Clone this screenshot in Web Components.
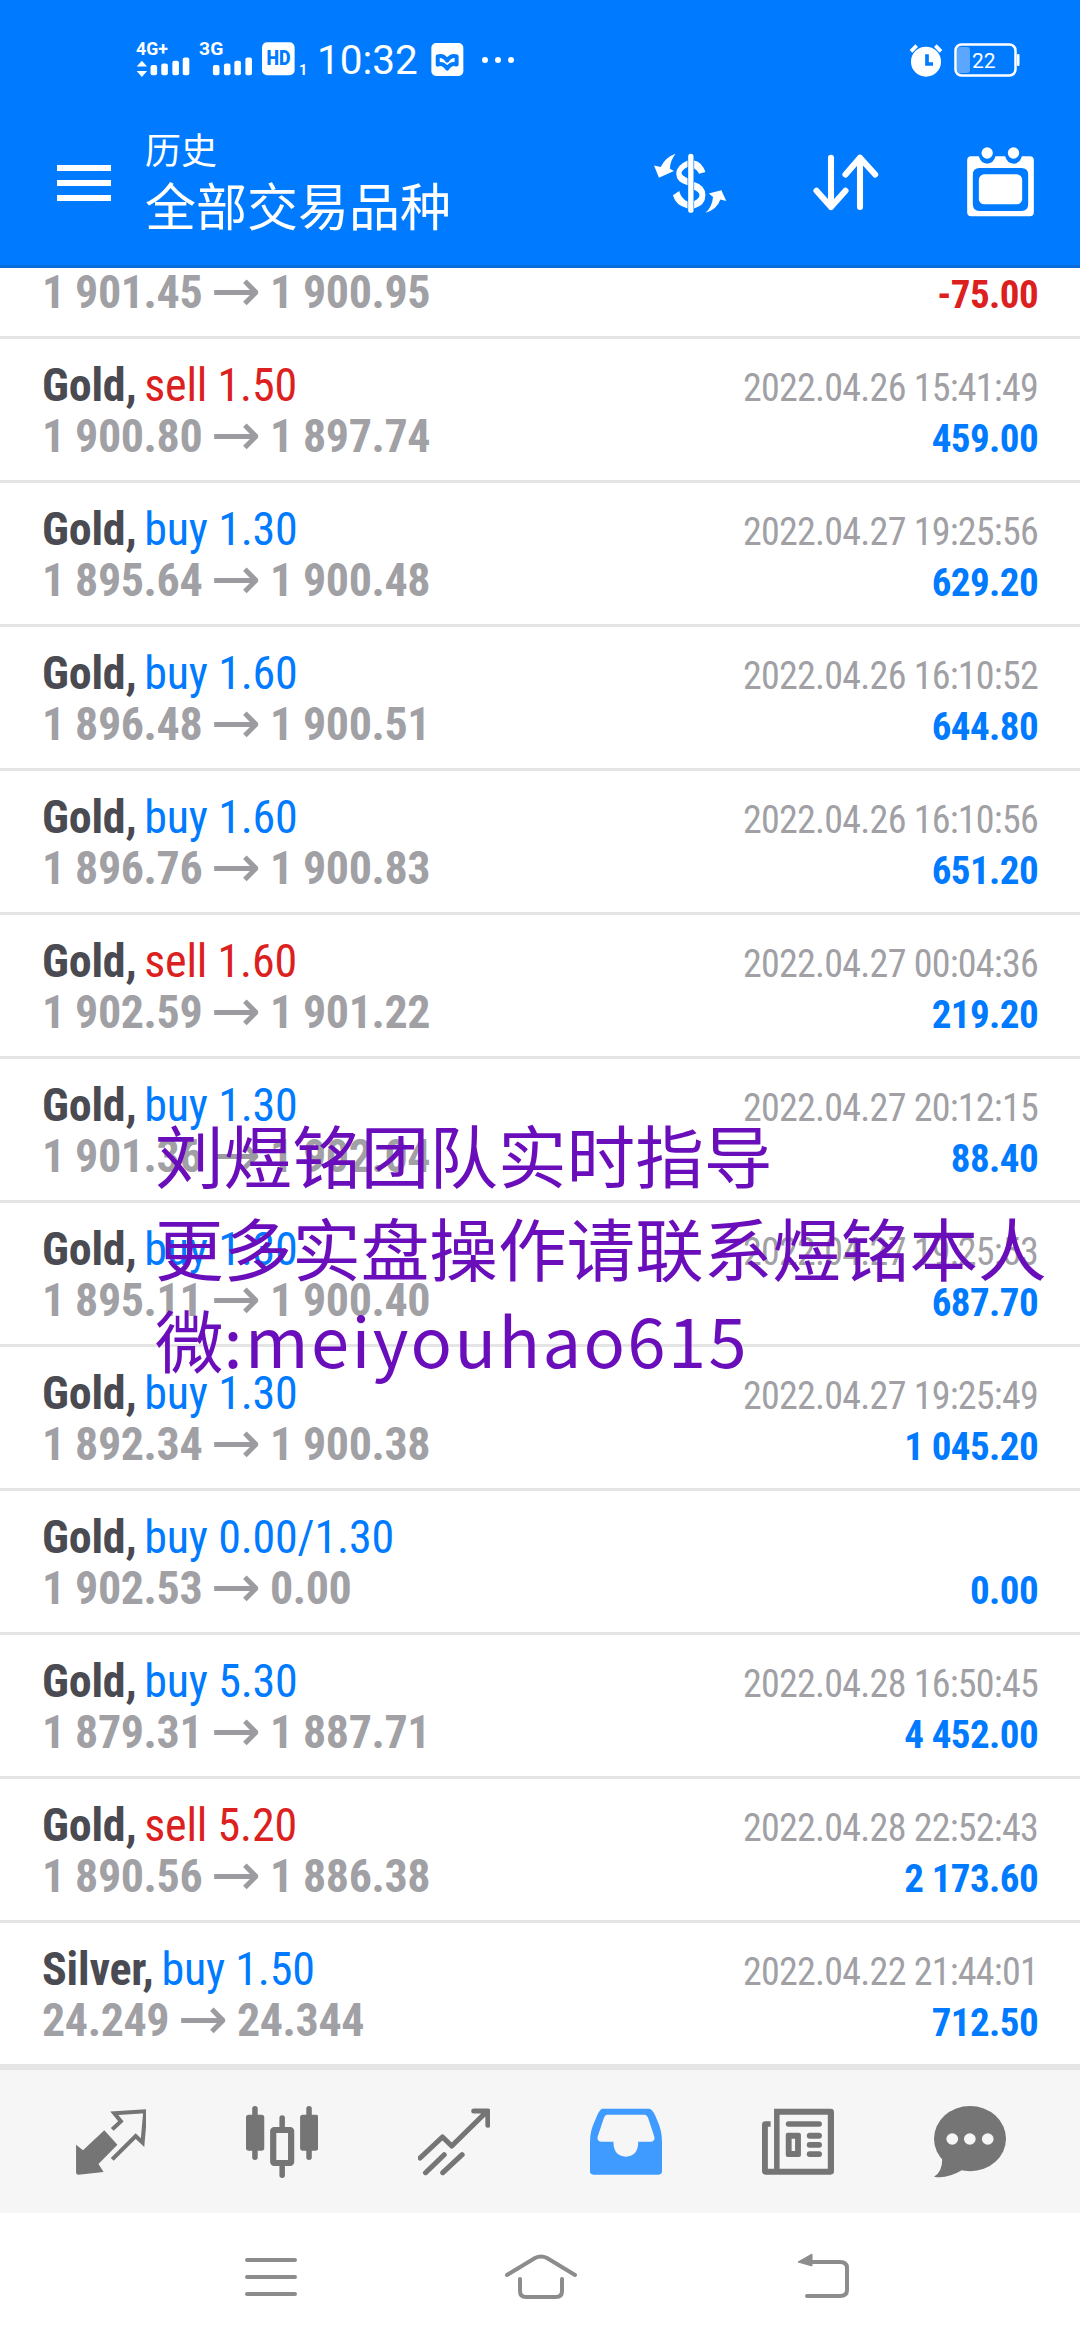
<!DOCTYPE html>
<html><head><meta charset="utf-8">
<style>
html,body{margin:0;padding:0;background:#fff}
body{width:1080px;height:2340px;overflow:hidden;position:relative;display:flex;flex-direction:column;font-family:Roboto,"Noto Sans CJK SC",sans-serif}
</style></head>
<body>
<status-bar></status-bar>
<app-bar></app-bar>
<trade-list>
<trade-row first prices="1 901.45|1 900.95" amount="-75.00" neg></trade-row>
<trade-row sym="Gold" side="sell" vol="1.50" prices="1 900.80|1 897.74" date="2022.04.26 15:41:49" amount="459.00"></trade-row>
<trade-row sym="Gold" side="buy" vol="1.30" prices="1 895.64|1 900.48" date="2022.04.27 19:25:56" amount="629.20"></trade-row>
<trade-row sym="Gold" side="buy" vol="1.60" prices="1 896.48|1 900.51" date="2022.04.26 16:10:52" amount="644.80"></trade-row>
<trade-row sym="Gold" side="buy" vol="1.60" prices="1 896.76|1 900.83" date="2022.04.26 16:10:56" amount="651.20"></trade-row>
<trade-row sym="Gold" side="sell" vol="1.60" prices="1 902.59|1 901.22" date="2022.04.27 00:04:36" amount="219.20"></trade-row>
<trade-row sym="Gold" side="buy" vol="1.30" prices="1 901.36|1 902.04" date="2022.04.27 20:12:15" amount="88.40"></trade-row>
<trade-row sym="Gold" side="buy" vol="1.30" prices="1 895.11|1 900.40" date="2022.04.27 19:25:53" amount="687.70"></trade-row>
<trade-row sym="Gold" side="buy" vol="1.30" prices="1 892.34|1 900.38" date="2022.04.27 19:25:49" amount="1 045.20"></trade-row>
<trade-row sym="Gold" side="buy" vol="0.00/1.30" prices="1 902.53|0.00" date="" amount="0.00"></trade-row>
<trade-row sym="Gold" side="buy" vol="5.30" prices="1 879.31|1 887.71" date="2022.04.28 16:50:45" amount="4 452.00"></trade-row>
<trade-row sym="Gold" side="sell" vol="5.20" prices="1 890.56|1 886.38" date="2022.04.28 22:52:43" amount="2 173.60"></trade-row>
<trade-row sym="Silver" side="buy" vol="1.50" prices="24.249|24.344" date="2022.04.22 21:44:01" amount="712.50"></trade-row>
</trade-list>
<tab-bar></tab-bar>
<sys-nav></sys-nav>
<water-mark></water-mark>
<script>
function def(name,html){
  customElements.define(name,class extends HTMLElement{
    connectedCallback(){
      if(this.shadowRoot)return;
      const r=this.attachShadow({mode:'open'});
      r.innerHTML=typeof html==='function'?html(this):html;
    }
  });
}
const COND='"Roboto Condensed","Liberation Sans Narrow",Roboto,sans-serif';
def('status-bar',`<style>
:host{display:flex;align-items:center;height:90px;flex:none;background:#007bff;color:#fff;padding:29px 0 0 136px;box-sizing:border-box;font-family:Roboto,sans-serif}
svg{display:block;flex:none}
.t{font-size:40.5px;line-height:40px;margin:0 13px 0 9px}
.sp{flex:1}
</style>
<svg width="54" height="37" viewBox="395 126 156 110" preserveAspectRatio="none"><text x="395" y="168" fill="#fff" font-family="Roboto" font-weight="700" font-size="52" textLength="92" lengthAdjust="spacingAndGlyphs">4G+</text><path d="M412 185l15 17h-30zM412 233l15-18h-30z" fill="#fff"/><g fill="#fff"><rect x="437" y="197" width="19" height="31" rx="6"/><rect x="468" y="193" width="19" height="35" rx="6"/><rect x="500" y="185" width="19" height="43" rx="6"/><rect x="530" y="175" width="19" height="53" rx="6"/></g></svg>
<svg style="margin-left:7px" width="56" height="37" viewBox="572 126 162 110" preserveAspectRatio="none"><text x="578" y="168" fill="#fff" font-family="Roboto" font-weight="700" font-size="52" textLength="70" lengthAdjust="spacingAndGlyphs">3G</text><g fill="#fff"><rect x="618" y="197" width="19" height="31" rx="6"/><rect x="650" y="193" width="19" height="35" rx="6"/><rect x="680" y="185" width="19" height="43" rx="6"/><rect x="712" y="175" width="19" height="53" rx="6"/></g></svg>
<svg style="margin-left:9px" width="46" height="37" viewBox="762 126 134 110" preserveAspectRatio="none"><rect x="762" y="130" width="95" height="98" rx="15" fill="#fff"/><text x="775" y="197" fill="#007bff" font-family="Roboto" font-weight="900" font-size="58" textLength="70" lengthAdjust="spacingAndGlyphs">HD</text><text x="870" y="226" fill="#fff" font-family="Roboto" font-weight="700" font-size="42">1</text></svg>
<span class="t">10:32</span>
<svg width="33" height="33" viewBox="1249 130 96 98"><rect x="1249" y="130" width="95" height="98" rx="14" fill="#fff"/><path d="M1268 170q16-6 28 12q12-18 28-12v24q-16-6-28 12q-12-18-28-12z" fill="none" stroke="#007bff" stroke-width="12" stroke-linejoin="round"/></svg>
<svg style="margin-left:17px" width="34" height="8" viewBox="0 0 34 8"><circle cx="4" cy="4" r="3" fill="#fff"/><circle cx="17" cy="4" r="3" fill="#fff"/><circle cx="30" cy="4" r="3" fill="#fff"/></svg>
<span class="sp"></span>
<svg width="34" height="34" viewBox="1070 130 98 102"><circle cx="1119" cy="186" r="45" fill="#fff"/><path d="M1122 164v29h18" fill="none" stroke="#007bff" stroke-width="11"/><path d="M1074 155l17-17M1147 138l17 17" stroke="#fff" stroke-width="11" fill="none"/></svg>
<svg style="margin:0 60px 0 11px" width="66" height="34" viewBox="0 0 66 34"><rect x="1.5" y="1.5" width="60" height="31" rx="6" fill="none" stroke="#fff" stroke-width="2.5"/><rect x="3" y="4" width="13" height="26" rx="3" fill="#5ba6ff"/><rect x="63" y="11" width="2.5" height="12" rx="1" fill="#fff"/><text x="18" y="25" font-family="Roboto" font-size="21" fill="#fff">22</text></svg>`);
def('app-bar',`<style>
:host{display:flex;align-items:center;height:178px;flex:none;background:#007bff;color:#fff;box-sizing:border-box;border-bottom:3px solid #0a6cd8;position:relative;z-index:2;font-family:"Noto Sans CJK SC",sans-serif}
svg{display:block;flex:none}
.menu{margin:11px 34px 0 57px}
.title{display:flex;flex-direction:column;flex:1;margin-top:3px}
.a{font-size:36px;line-height:50px;height:50px}
.b{font-size:51px;line-height:62px;height:62px}
</style>
<svg class="menu" width="54" height="36" viewBox="0 0 54 36"><rect y="0" width="54" height="6" fill="#fff"/><rect y="15" width="54" height="6" fill="#fff"/><rect y="30" width="54" height="6" fill="#fff"/></svg>
<div class="title"><span class="a">历史</span><span class="b">全部交易品种</span></div>
<svg width="73" height="60" viewBox="40 38 220 180" fill="#fff" style="margin-top:11px"><rect x="143" y="40" width="16" height="178" rx="8"/>
<path d="M161 60Q185 65 195 95L176 100Q170 88 161 84ZM141 60Q107 75 107 100Q107 125 141 135V114Q123 105 123 98Q123 90 141 80ZM161 125Q195 135 195 165Q195 195 161 205V182Q177 175 177 165Q177 155 161 148ZM141 205Q105 195 97 165L116 152Q122 175 141 184Z"/>
<path d="M105 40Q88 62 88 85L100 92L55 112L40 75L60 80Q75 50 105 40ZM195 218Q215 200 218 170L205 160L243 150L258 182L240 178Q230 208 195 218Z"/></svg>
<svg style="margin:11px 0 0 85px" width="67" height="58" viewBox="790 465 196 172"><path d="M845 476V622M802 574L845 622L888 574M931 622V476M888 526L931 476L976 526" fill="none" stroke="#fff" stroke-width="18" stroke-linecap="round" stroke-linejoin="round"/></svg>
<svg style="margin:8px 45px 0 87px" width="69" height="70" viewBox="1237 440 200 210"><path fill-rule="evenodd" fill="#fff" d="M1249 468H1272Q1278 490 1297 490Q1316 490 1322 468H1351Q1357 490 1376 490Q1395 490 1401 468H1425Q1437 468 1437 480V636Q1437 648 1425 648H1249Q1237 648 1237 636V480Q1237 468 1249 468ZM1274 503Q1254 503 1254 523V612Q1254 632 1274 632H1400Q1420 632 1420 612V523Q1420 503 1400 503Z"/><rect x="1272" y="522" width="130" height="90" rx="16" fill="#fff"/><circle cx="1297" cy="458" r="17" fill="#fff"/><circle cx="1376" cy="458" r="17" fill="#fff"/></svg>`);
def('trade-list',`<style>
:host{display:block;flex:1;min-height:0;overflow:hidden;position:relative}
.in{margin-top:-73px}
</style><div class="in"><slot></slot></div>`);
def('trade-row',h=>{
  const [p1,p2]=(h.getAttribute('prices')||'|').split('|');
  const sym=h.getAttribute('sym'),side=h.getAttribute('side'),vol=h.getAttribute('vol');
  const date=h.getAttribute('date')||'',amt=h.getAttribute('amount');
  const neg=h.hasAttribute('neg');
  const c=side==='sell'?'r':'b';
  return `<style>
:host{display:flex;justify-content:space-between;height:144px;box-sizing:border-box;border-bottom:3px solid #e5e5e5;padding:21px 42px 0 42px;background:#fff;font-family:${COND};white-space:pre}
.col{display:flex;flex-direction:column}
.right{align-items:flex-end;padding-top:3px}
.l{height:51px;line-height:51px;display:block}
.title{font-size:46px;letter-spacing:-.2px;word-spacing:-2.5px}
.title .r,.title .b{word-spacing:0}
.sym{font-weight:700;color:#4a4a52}
.b{color:#007aff}.r{color:#dc2020}
.price{font-size:46px;font-weight:700;color:#a0a0a5;letter-spacing:-.4px}
.ar{font:400 60px/0 "DejaVu Sans",sans-serif;color:#9c9ca0;letter-spacing:0;vertical-align:-3px;margin:0 -1.5px}
.date{font-size:38px;color:#a0a0a5;letter-spacing:-.74px}
.amt{font-size:39px;font-weight:700;letter-spacing:-.6px}
</style>
<div class="col"><span class="l title">${sym?`<span class="sym">${sym},</span> <span class="${c}">${side} ${vol}</span>`:''}</span><span class="l price">${p1} <span class="ar">→</span> ${p2}</span></div>
<div class="col right"><span class="l date">${date}</span><span class="l amt ${neg||amt[0]=='-'?'r':'b'}">${amt}</span></div>`;
});
def('tab-bar',`<style>
:host{display:grid;grid-template-columns:repeat(6,172px);flex:none;height:149px;box-sizing:border-box;padding:0 24px;align-items:center;justify-items:center;background:#f6f6f6;border-top:6px solid #e5e5e5}
svg{display:block}
</style>
<svg width="72" height="72" viewBox="209 192 209 216" preserveAspectRatio="none"><path fill="#757575" d="M215 308L235 325L297 265L335 308L280 366L295 390L222 398Q215 398 215 390Z"/><path d="M320 262L345 238L326 214L416 208L408 302L388 282L320 352" fill="none" stroke="#757575" stroke-width="12"/></svg>
<svg width="72" height="72" viewBox="714 192 209 216" preserveAspectRatio="none"><g fill="#757575"><rect x="714" y="218" width="53" height="108" rx="8"/><rect x="871" y="218" width="53" height="108" rx="8"/><rect x="732" y="192" width="16" height="162" rx="8"/><rect x="889" y="192" width="16" height="162" rx="8"/><rect x="811" y="220" width="16" height="188" rx="8"/></g><rect x="793" y="264" width="52" height="99" rx="3" fill="#f6f6f6" stroke="#757575" stroke-width="18"/></svg>
<svg width="72" height="72" viewBox="1214 192 209 216" preserveAspectRatio="none"><path d="M1220 348L1285 285L1312 312L1410 212M1376 207H1417V250M1236 392L1290 338M1286 392L1342 338" fill="none" stroke="#757575" stroke-width="15" stroke-linecap="round" stroke-linejoin="round"/></svg>
<svg width="72" height="72" viewBox="145 192 209 216" preserveAspectRatio="none"><path fill="#3f9bff" fill-rule="evenodd" d="M180 200H318Q330 205 340 235Q354 265 354 300V388Q354 398 344 398H155Q145 398 145 388V300Q145 265 160 235Q170 205 180 200ZM195 218Q187 218 183 235L167 285Q165 298 177 299H213Q213 342 249 344Q285 342 285 299H322Q334 298 332 285L316 235Q312 218 303 218Z"/></svg>
<svg width="72" height="72" viewBox="645 192 209 216" preserveAspectRatio="none"><path fill="#757575" fill-rule="evenodd" d="M670 238H655Q645 238 645 248V388Q645 398 655 398H844Q854 398 854 388V210Q854 200 844 200H680V380H662V254H670ZM696 218H836V380H696Z"/><g fill="#757575"><rect x="714" y="238" width="105" height="16" rx="8"/><path fill-rule="evenodd" d="M720 272H752Q758 272 758 278V339Q758 345 752 345H720Q714 345 714 339V278Q714 272 720 272ZM731 290V327H741V290Z"/><rect x="775" y="272" width="44" height="18" rx="9"/><rect x="775" y="300" width="44" height="17" rx="8"/><rect x="775" y="328" width="44" height="17" rx="8"/></g></svg>
<svg width="72" height="72" viewBox="1144 192 209 216" preserveAspectRatio="none"><ellipse cx="1248.500" cy="290" rx="104.500" ry="98" fill="#757575"/><path d="M1168 350Q1168 390 1144 404Q1180 412 1225 385Z" fill="#757575"/><g fill="#f6f6f6"><circle cx="1197" cy="291" r="17"/><circle cx="1248" cy="291" r="17"/><circle cx="1300" cy="291" r="17"/></g></svg>`);
def('sys-nav',`<style>
:host{display:grid;grid-template-columns:repeat(3,1fr);flex:none;height:127px;background:#fff;align-items:start}
svg{display:block}
</style>
<svg style="margin:42px 0 0 244px" width="54" height="44" viewBox="0 0 54 44"><path d="M3 5H51M3 22H51M3 39H51" stroke="#8c8c8c" stroke-width="4" stroke-linecap="round"/></svg>
<svg style="margin:40px 0 0 144px" width="74" height="48" viewBox="0 0 74 48"><path d="M3 22L31 5Q37 2 43 5L71 22M16 26V38Q16 44 22 44H52Q58 44 58 38V26" fill="none" stroke="#8c8c8c" stroke-width="4" stroke-linecap="round"/></svg>
<svg style="margin:40px 0 0 76px" width="56" height="46" viewBox="0 0 56 46"><path d="M2 9L16 1V13Z" fill="#8c8c8c" stroke="#8c8c8c" stroke-width="1"/><path d="M14 9H44Q51 9 51 15V37Q51 43 44 43H11" fill="none" stroke="#8c8c8c" stroke-width="4" stroke-linecap="round"/></svg>`);
def('water-mark',`<style>
:host{position:absolute;left:155px;top:1107px;color:#6a0dbb;font:68.6px/92.5px "Noto Sans CJK SC",sans-serif;white-space:nowrap;pointer-events:none;z-index:3}
div{height:92.5px}
.en{letter-spacing:2.4px}
</style><div>刘煜铭团队实时指导</div><div>更多实盘操作请联系煜铭本人</div><div>微<span class="en">:meiyouhao615</span></div>`);
</script>
</body></html>
